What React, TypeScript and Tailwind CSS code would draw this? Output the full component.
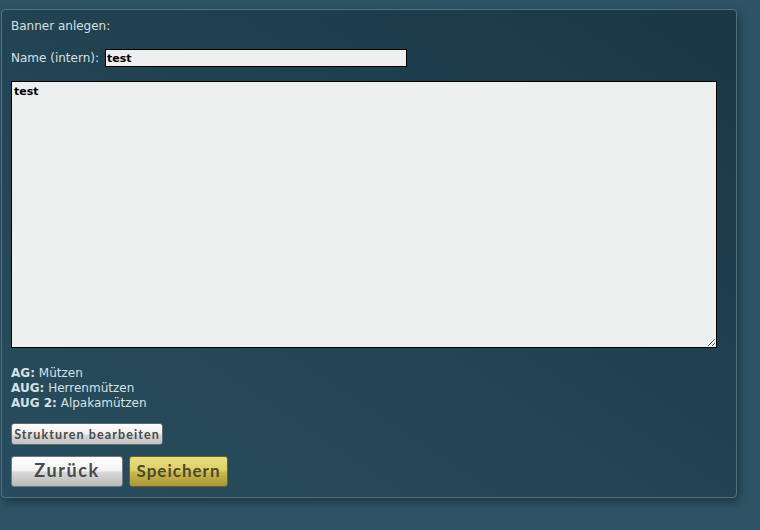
import { useState } from "react";

const labelFont = "font-['DejaVu_Sans','Verdana',sans-serif]";
const buttonFont = "font-['Lato','DejaVu_Sans',sans-serif]";

const structures = [
    { code: "AG", name: "Mützen" },
    { code: "AUG", name: "Herrenmützen" },
    { code: "AUG 2", name: "Alpakamützen" },
];

const BannerForm = () => {
    const [name, setName] = useState<string>("test");
    const [content, setContent] = useState<string>("test");

    return (
        <div className="w-full h-[530px] bg-[#2e5365] overflow-hidden">
            <div className={`ml-[1px] mt-[9px] w-[736px] h-[489px] rounded-[4px] border border-[#4f7282] bg-[linear-gradient(to_top_right,#294d5e_0%,#234454_45%,#1b3745_100%)] shadow-[2px_4px_8px_rgba(0,0,0,0.35)] pl-[9px] pt-[9px] text-[12px] leading-[15px] text-[#d6e0e4] ${labelFont}`}>
                <p>Banner anlegen:</p>

                <div className="mt-[15px] flex flex-row items-center gap-[6px]">
                    <span>Name (intern):</span>
                    <input
                        value={name}
                        onChange={(e) => setName(e.target.value)}
                        className="w-[302px] h-[18px] border border-black bg-[#efefef] px-[1px] text-[11px] font-bold text-black outline-none"
                    />
                </div>

                <textarea
                    value={content}
                    onChange={(e) => setContent(e.target.value)}
                    className="block mt-[14px] w-[706px] h-[267px] border border-black bg-[#eef0ef] px-[2px] pt-[3px] text-[11px] leading-[14px] font-bold text-black outline-none"
                />

                <div className="mt-[18px] flex flex-col">
                    {structures.map((s) => (
                        <p key={s.code}>
                            <span className="font-bold">{s.code}:</span> {s.name}
                        </p>
                    ))}
                </div>

                <button className={`mt-[12px] block w-[152px] h-[22px] whitespace-nowrap rounded-[3px] border border-[#5d6b72] bg-[linear-gradient(to_bottom,#ffffff_0%,#eeeeee_50%,#d6d6d6_55%,#c4c4c4_100%)] text-[12.5px] font-bold tracking-[1.1px] text-[#4b4b4b] ${buttonFont}`}>
                    Strukturen bearbeiten
                </button>

                <div className="mt-[11px] flex flex-row gap-[6px]">
                    <button className={`w-[112px] h-[31px] pb-[2px] rounded-[3px] border border-[#6f7a80] bg-[linear-gradient(to_bottom,#ffffff_0%,#f1f1f1_48%,#d9d9d9_52%,#b9b9b9_100%)] text-[18px] font-bold tracking-[1.6px] text-[#4a4a4a] ${buttonFont}`}>
                        Zurück
                    </button>
                    <button className={`w-[99px] h-[31px] pb-[2px] rounded-[3px] border border-[#6b6220] bg-[linear-gradient(to_bottom,#e9df84_0%,#dccd62_48%,#cbb94a_52%,#a7973a_100%)] text-[17px] font-bold tracking-[1px] text-[#4d4830] ${buttonFont}`}>
                        Speichern
                    </button>
                </div>
            </div>
        </div>
    );
};

export default function App() {
    return <BannerForm />;
}
